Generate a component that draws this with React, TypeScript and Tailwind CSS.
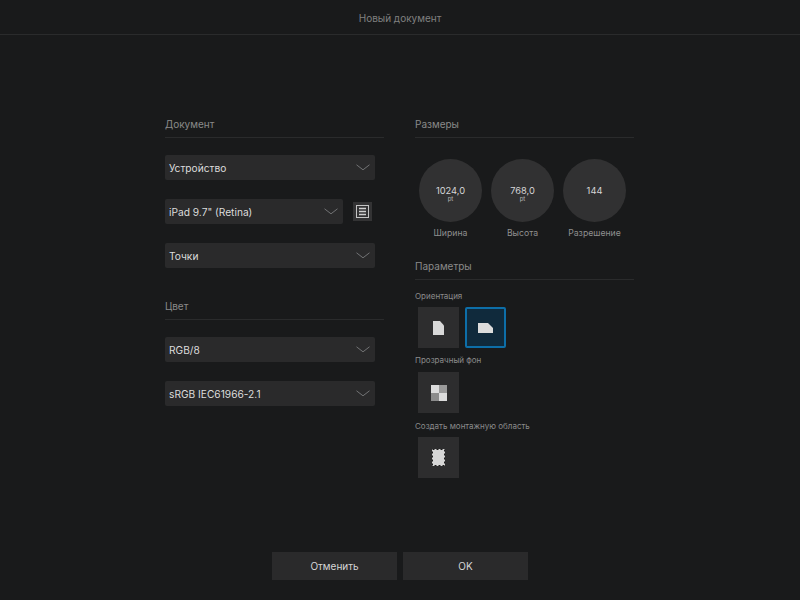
const FONT = "font-['Inter','Liberation_Sans',sans-serif]";

function Chevron() {
  return (
    <svg width="14" height="7" viewBox="0 0 14 7" fill="none" className="shrink-0">
      <path d="M0.5 0.8 L7 5.8 L13.5 0.8" stroke="#727375" strokeWidth="1" />
    </svg>
  );
}

function Select({ label, className }: { label: string; className: string }) {
  return (
    <div className={`flex h-[25px] items-center justify-between rounded-[2px] bg-[#2a2a2b] pl-[4px] pr-[5px] text-[10.2px] text-[#dcdcdc] ${className}`}>
      <span className="pt-[2px]">{label}</span>
      <Chevron />
    </div>
  );
}

function SectionTitle({ children }: { children: string }) {
  return (
    <div className="flex h-[26px] items-center border-b border-[#2a2b2c] text-[10px] text-[#8a8a8a]">
      {children}
    </div>
  );
}

function Dial({ value, unit, label }: { value: string; unit?: string; label: string }) {
  return (
    <div className="flex w-[63px] flex-col items-center">
      <div className={`flex h-[63px] w-[63px] flex-col items-center justify-center rounded-full bg-[#313132] text-[#d6d6d6] ${unit ? "pt-[5px]" : "pt-0"}`}>
        <span className="text-[9.3px] leading-[11px]">{value}</span>
        {unit && <span className="text-[6px] leading-[6px] text-[#b5b5b5]">{unit}</span>}
      </div>
      <span className="mt-[6px] whitespace-nowrap text-[8.7px] leading-[11px] text-[#8f8f8f]">{label}</span>
    </div>
  );
}

function Tile({ active, children }: { active?: boolean; children: React.ReactNode }) {
  return (
    <div
      className={`flex h-[41px] w-[41px] items-center justify-center ${
        active ? "rounded-[2px] border-2 border-[#0d6ea8] bg-[#102a3c]" : "bg-[#2d2d2e]"
      }`}
    >
      {children}
    </div>
  );
}

function OptionLabel({ children }: { children: string }) {
  return <div className="h-[12px] text-[8px] leading-[12px] text-[#8b8b8b]">{children}</div>;
}

export default function App() {
  return (
    <div className={`flex h-[600px] w-[800px] flex-col overflow-hidden bg-[#191a1b] ${FONT}`}>
      <header className="flex h-[35px] shrink-0 items-center justify-center border-b border-[#2a2b2c] pt-[2px] text-[10px] text-[#808080]">
        Новый документ
      </header>

      <main className="flex gap-[31px] pl-[165px] pt-[77px]">
        <section className="flex w-[219px] flex-col">
          <SectionTitle>Документ</SectionTitle>
          <Select label="Устройство" className="mt-[17px] w-[210px]" />
          <div className="mt-[19px] flex items-center gap-[10px]">
            <Select label='iPad 9.7" (Retina)' className="w-[178px]" />
            <div className="flex h-[19px] w-[19px] items-center justify-center bg-[#333334]">
              <svg width="13" height="13" viewBox="0 0 13 13" fill="none">
                <rect x="0.5" y="0.5" width="12" height="12" stroke="#c4c4c4" />
                <path d="M3 3.5H10M3 6.5H10M3 9.5H10" stroke="#d0d0d0" strokeWidth="1.5" />
              </svg>
            </div>
          </div>
          <Select label="Точки" className="mt-[19px] w-[210px]" />

          <div className="mt-[26px]">
            <SectionTitle>Цвет</SectionTitle>
          </div>
          <Select label="RGB/8" className="mt-[17px] w-[210px]" />
          <Select label="sRGB IEC61966-2.1" className="mt-[19px] w-[210px]" />
        </section>

        <section className="flex w-[219px] flex-col">
          <SectionTitle>Размеры</SectionTitle>
          <div className="mt-[21px] flex gap-[9px] pl-[4px]">
            <Dial value="1024,0" unit="pt" label="Ширина" />
            <Dial value="768,0" unit="pt" label="Высота" />
            <Dial value="144" label="Разрешение" />
          </div>
          <div className="mt-[15px]">
            <SectionTitle>Параметры</SectionTitle>
          </div>
          <div className="mt-[10px]">
            <OptionLabel>Ориентация</OptionLabel>
          </div>
          <div className="ml-[3px] mt-[5px] flex gap-[6px]">
            <Tile>
              <svg width="11" height="14" viewBox="0 0 11 14">
                <path d="M0 0H7L11 4.5V14H0Z" fill="#d8d8d8" />
              </svg>
            </Tile>
            <Tile active>
              <svg width="15" height="10" viewBox="0 0 15 10">
                <path d="M0 0H10L15 5V10H0Z" fill="#dcdcdc" />
              </svg>
            </Tile>
          </div>
          <div className="mt-[6px]">
            <OptionLabel>Прозрачный фон</OptionLabel>
          </div>
          <div className="ml-[3px] mt-[6px]">
            <Tile>
              <svg width="16" height="16" viewBox="0 0 16 16">
                <rect width="8" height="8" fill="#dcdcdc" />
                <rect x="8" width="8" height="8" fill="#9a9a9a" />
                <rect y="8" width="8" height="8" fill="#8c8c8c" />
                <rect x="8" y="8" width="8" height="8" fill="#dcdcdc" />
              </svg>
            </Tile>
          </div>
          <div className="mt-[7px]">
            <OptionLabel>Создать монтажную область</OptionLabel>
          </div>
          <div className="ml-[3px] mt-[5px]">
            <Tile>
              <svg width="13" height="17" viewBox="0 0 13 17">
                <rect x="0" y="0" width="13" height="17" fill="#d6d6d6" />
                <rect x="0.5" y="0.5" width="12" height="16" fill="none" stroke="#1c1c1c" strokeDasharray="2 2" />
              </svg>
            </Tile>
          </div>
        </section>
      </main>

      <footer className="mt-auto flex justify-center gap-[6px] pb-[20px]">
        <button className="h-[28px] w-[125px] bg-[#2a2a2b] text-[10px] text-[#d6d6d6]">Отменить</button>
        <button className="h-[28px] w-[125px] bg-[#2a2a2b] text-[10px] text-[#d6d6d6]">OK</button>
      </footer>
    </div>
  );
}
